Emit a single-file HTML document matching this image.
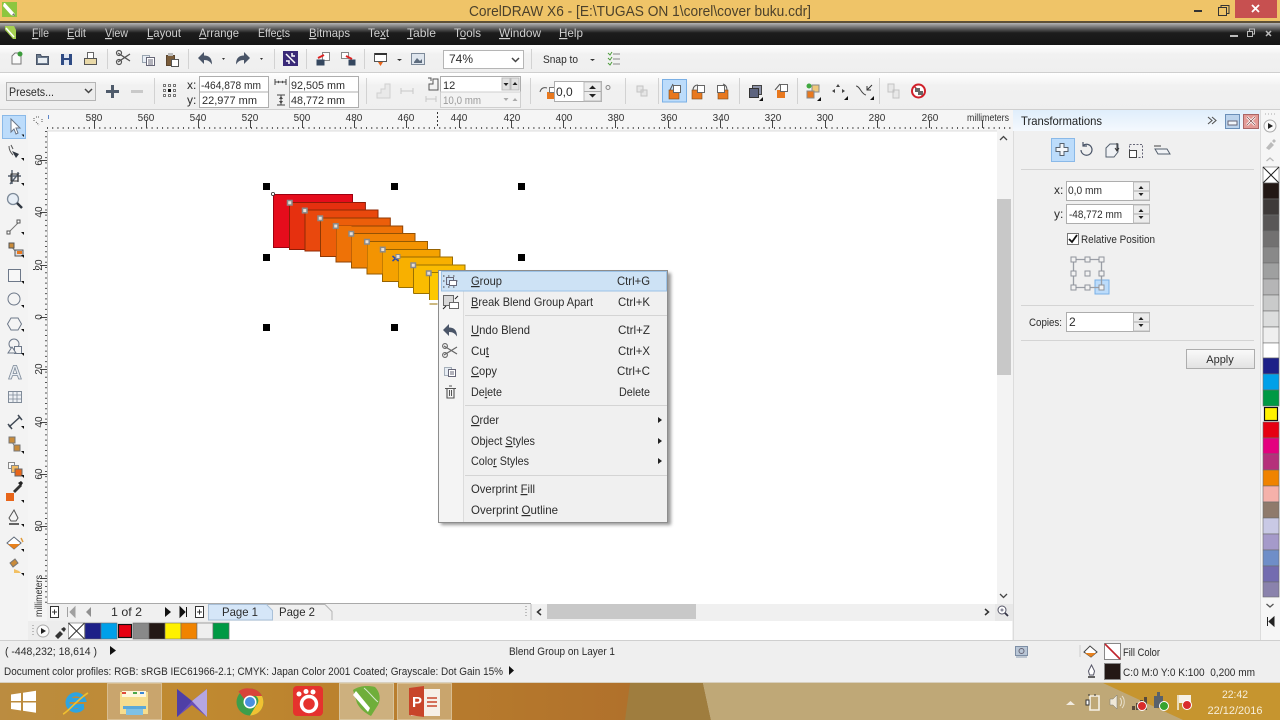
<!DOCTYPE html>
<html lang="en">
<head>
<meta charset="utf-8">
<title>CorelDRAW X6</title>
<style>
html,body{margin:0;padding:0;background:#f0f0f0;width:1280px;height:720px;overflow:hidden}
svg{display:block;filter:blur(.35px)}
text{font-family:"Liberation Sans",sans-serif;font-size:12px;fill:#2c2c2c}
.u{text-decoration:underline}
.mb text{fill:#cfcfcf;font-size:12px}
.r text{font-size:10px;fill:#333;text-anchor:middle}
.sw rect{stroke:#6d6d6d;stroke-width:.6}
.in{fill:#fff;stroke:#adadad}
.sep{stroke:#d2d2d2;stroke-width:1}
.bl rect{stroke-width:1}
</style>
</head>
<body>
<svg width="1280" height="720" viewBox="0 0 1280 720" xmlns="http://www.w3.org/2000/svg">
<defs>
<linearGradient id="gm" x1="0" y1="0" x2="0" y2="1"><stop offset="0" stop-color="#b5b5b5"/><stop offset=".45" stop-color="#1c1c1c"/><stop offset="1" stop-color="#151515"/></linearGradient>
<linearGradient id="gt" x1="0" y1="0" x2="0" y2="1"><stop offset="0" stop-color="#ffffff"/><stop offset=".35" stop-color="#f1f1f1"/><stop offset="1" stop-color="#efefef"/></linearGradient>
<linearGradient id="gh" x1="0" y1="0" x2="0" y2="1"><stop offset="0" stop-color="#e0eefb"/><stop offset="1" stop-color="#f4f9fe"/></linearGradient>
<linearGradient id="gb" x1="0" y1="0" x2="1" y2="0"><stop offset="0" stop-color="#bb8c40"/><stop offset=".3" stop-color="#c08a30"/><stop offset="1" stop-color="#b0702b"/></linearGradient>
<linearGradient id="gs" x1="0" y1="0" x2="0" y2="1"><stop offset="0" stop-color="#fafafa"/><stop offset="1" stop-color="#e2e2e2"/></linearGradient>
<filter id="sh" x="-5%" y="-5%" width="110%" height="110%"><feGaussianBlur stdDeviation="1.500"/></filter>
</defs>

<!-- base -->
<rect width="1280" height="720" fill="#f0f0f0"/>

<!-- title bar -->
<rect width="1280" height="22" fill="#efc468"/>
<rect y="21" width="1280" height="2" fill="#5e5138"/>
<rect x="2" y="2" width="15" height="15" fill="#8dc63f"/>
<path d="M5 3l10 11-1 2-3-1-8-9 1-3z" fill="#fff"/><path d="M12 15l3 1-1-3z" fill="#777"/>
<text x="469" y="16" font-size="15" style="font-size:15px;fill:#4c412b" textLength="342" lengthAdjust="spacingAndGlyphs">CorelDRAW X6 - [E:\TUGAS ON 1\corel\cover buku.cdr]</text>
<rect x="1194" y="10" width="8" height="2" fill="#333"/>
<path d="M1218.500 7.500h8v8h-8zM1221 7.500V5.500h8v8h-2.500" fill="none" stroke="#333" stroke-width="1"/>
<rect x="1235" y="0" width="42" height="18" fill="#c75050"/>
<path d="M1252 5l7 7M1259 5l-7 7" stroke="#fff" stroke-width="1.800"/>

<!-- menu bar -->
<rect y="23" width="1280" height="22" fill="url(#gm)"/>
<path d="M5 26h9l2 4v9l-3 0-8-9z" fill="#a5d051"/><path d="M6 28l8 9" stroke="#fff" stroke-width="1.500"/>
<g class="mb">
<text x="32" y="37" textLength="17" lengthAdjust="spacingAndGlyphs"><tspan class="u">F</tspan>ile</text>
<text x="67" y="37" textLength="19" lengthAdjust="spacingAndGlyphs"><tspan class="u">E</tspan>dit</text>
<text x="105" y="37" textLength="23" lengthAdjust="spacingAndGlyphs"><tspan class="u">V</tspan>iew</text>
<text x="147" y="37" textLength="34" lengthAdjust="spacingAndGlyphs"><tspan class="u">L</tspan>ayout</text>
<text x="199" y="37" textLength="40" lengthAdjust="spacingAndGlyphs"><tspan class="u">A</tspan>rrange</text>
<text x="258" y="37" textLength="32" lengthAdjust="spacingAndGlyphs">Effe<tspan class="u">c</tspan>ts</text>
<text x="309" y="37" textLength="41" lengthAdjust="spacingAndGlyphs"><tspan class="u">B</tspan>itmaps</text>
<text x="368" y="37" textLength="21" lengthAdjust="spacingAndGlyphs">Te<tspan class="u">x</tspan>t</text>
<text x="407" y="37" textLength="29" lengthAdjust="spacingAndGlyphs"><tspan class="u">T</tspan>able</text>
<text x="454" y="37" textLength="27" lengthAdjust="spacingAndGlyphs">T<tspan class="u">o</tspan>ols</text>
<text x="499" y="37" textLength="42" lengthAdjust="spacingAndGlyphs"><tspan class="u">W</tspan>indow</text>
<text x="559" y="37" textLength="24" lengthAdjust="spacingAndGlyphs"><tspan class="u">H</tspan>elp</text>
</g>
<rect x="1230" y="35" width="8" height="2" fill="#bbb"/>
<path d="M1247.500 31.500h5v5h-5zM1249.500 31v-2h5v5h-2" fill="none" stroke="#bbb"/>
<path d="M1266 31l5 5M1271 31l-5 5" stroke="#bbb" stroke-width="1.500"/>

<!-- standard toolbar -->
<rect y="45" width="1280" height="27" fill="url(#gt)"/>
<rect y="72" width="1280" height="1" fill="#cfcfcf"/>
<!-- new -->
<path d="M12 56l3-3h6v11H12z" fill="#fafafa" stroke="#777"/><circle cx="20" cy="54" r="2.500" fill="#3a9b3a"/>
<!-- open -->
<path d="M36.500 54.500h4l1 2h7v8h-12z" fill="#6b7a8d" stroke="#4a5568"/><rect x="38" y="58" width="9" height="5" fill="#e8edf2"/>
<!-- save -->
<rect x="61" y="54" width="11" height="11" fill="#2f4b84"/><rect x="64" y="54" width="5" height="4" fill="#dfe6f2"/><rect x="64" y="60" width="5" height="5" fill="#dfe6f2"/>
<!-- print -->
<path d="M87.500 52.500h6v6h-6z" fill="#fff" stroke="#666"/><path d="M84.500 58.500h12v6h-12z" fill="#e9d9a8" stroke="#555"/>
<line class="sep" x1="107.500" y1="49" x2="107.500" y2="69"/>
<!-- scissors -->
<path d="M118 53l12 8M118 62l12-8" stroke="#555" stroke-width="1.300" fill="none"/><circle cx="119" cy="53" r="2.500" fill="none" stroke="#555" stroke-width="1.200"/><circle cx="119" cy="62" r="2.500" fill="none" stroke="#555" stroke-width="1.200"/>
<!-- copy -->
<path d="M142.500 55.500h7v7h-7z" fill="#e7edf4" stroke="#9aa5b1"/><path d="M146.500 57.500h8v8h-8z" fill="#fff" stroke="#667"/><path d="M148 60h5M148 62h5M148 64h5" stroke="#667"/>
<!-- paste -->
<path d="M166.500 55.500h8v10h-8z" fill="#7a5c3a" stroke="#5b4630"/><rect x="168" y="53" width="5" height="3" fill="#bbb"/><path d="M171.500 59.500h7v7h-7z" fill="#fff" stroke="#555"/>
<line class="sep" x1="188.500" y1="49" x2="188.500" y2="69"/>
<!-- undo/redo -->
<path d="M198 58l6-6v3.500c5 0 8 2.500 8 9-2-3-4-4.500-8-4.500V64z" fill="#4a5568"/>
<path d="M222 58l3 0-1.500 2z" fill="#333"/>
<path d="M250 58l-6-6v3.500c-5 0-8 2.500-8 9 2-3 4-4.500 8-4.500V64z" fill="#4a5568"/>
<path d="M260 58l3 0-1.500 2z" fill="#333"/>
<line class="sep" x1="274.500" y1="49" x2="274.500" y2="69"/>
<rect x="283" y="51" width="15" height="15" fill="#3a2a78"/><path d="M286 54l9 9M295 56l-3 0 0-3M286 61l3 0 0 3" stroke="#fff" stroke-width="1.500" fill="none"/>
<line class="sep" x1="306.500" y1="49" x2="306.500" y2="69"/>
<!-- import/export -->
<path d="M322.500 52.500h7v8h-7z" fill="#fff" stroke="#888"/><path d="M316.500 59.500h8v6h-8z" fill="#35475f"/><path d="M318 58l6-3" stroke="#d22" stroke-width="2"/>
<path d="M341.500 52.500h7v6h-7z" fill="#fff" stroke="#888"/><path d="M348.500 59.500h7v6h-7z" fill="#35475f"/><path d="M346 56l6 3" stroke="#d22" stroke-width="2"/>
<line class="sep" x1="364.500" y1="49" x2="364.500" y2="69"/>
<path d="M374.500 53.500h12v8h-12z" fill="#fff" stroke="#555"/><rect x="375" y="53" width="12" height="2" fill="#333"/><path d="M378 62h5l-2.500 4z" fill="#e8651a"/>
<path d="M397 59h5l-2.500 2z" fill="#333"/>
<path d="M411.500 53.500h13v11h-13z" fill="#dfe6ee" stroke="#7d8a99"/><path d="M414 62l3-4 3 3 2-2v4h-8z" fill="#5d6c7e"/>
<rect x="443.500" y="50.500" width="80" height="18" fill="#fff" stroke="#b5b5b5"/>
<text x="449" y="63">74%</text>
<path d="M512 58l3.500 3.500 3.500-3.500" fill="none" stroke="#444" stroke-width="1.500"/>
<line class="sep" x1="531.500" y1="49" x2="531.500" y2="69"/>
<text x="543" y="63" textLength="35" lengthAdjust="spacingAndGlyphs" style="font-size:11px">Snap to</text>
<path d="M590 59h5l-2.500 2z" fill="#333"/>
<path d="M608 53l2 2 2-3M608 58l2 2 2-3M608 63l2 2 2-3" stroke="#4c9b3a" fill="none"/><path d="M613 54h7M613 59h7M613 64h7" stroke="#888"/>

<!-- property bar -->
<rect y="73" width="1280" height="36" fill="url(#gt)"/>
<rect y="109" width="1280" height="1" fill="#cfcfcf"/>
<rect x="6.500" y="82.500" width="89" height="18" fill="#ececec" stroke="#b5b5b5"/>
<text x="9" y="96" textLength="45" lengthAdjust="spacingAndGlyphs">Presets...</text>
<path d="M85 89l3.500 3.500 3.500-3.500" fill="none" stroke="#444" stroke-width="1.500"/>
<path d="M106 90h5v-5h3v5h5v3h-5v5h-3v-5h-5z" fill="#4f5b6b"/>
<rect x="131" y="90" width="12" height="3" fill="#c9c9c9"/>
<line class="sep" x1="154.500" y1="78" x2="154.500" y2="104"/>
<path d="M163.500 84.500h2v2h-2zM168.500 84.500h2v2h-2zM173.500 84.500h2v2h-2zM163.500 89.500h2v2h-2zM173.500 89.500h2v2h-2zM163.500 94.500h2v2h-2zM168.500 94.500h2v2h-2zM173.500 94.500h2v2h-2z" fill="#fff" stroke="#777"/>
<rect x="168" y="89" width="3" height="3" fill="#111"/>
<text x="187" y="89">x:</text><text x="187" y="104">y:</text>
<rect x="199.500" y="76.500" width="69" height="15.500" class="in"/><rect x="199.500" y="92" width="69" height="15.500" class="in"/>
<text x="201" y="89" textLength="60" lengthAdjust="spacingAndGlyphs" style="font-size:11px">-464,878 mm</text>
<text x="202" y="104" textLength="55" lengthAdjust="spacingAndGlyphs" style="font-size:11px">22,977 mm</text>
<path d="M275 82h11M275 79v6M286 79v6" stroke="#444" fill="none"/>
<path d="M277 82l2-1.500v3zM284 82l-2-1.500v3z" fill="#444"/>
<path d="M277 95h8M277 105h8M281 95v10" stroke="#444" fill="none"/><path d="M281 96l-2 3h4zM281 104l-2-3h4z" fill="#444"/>
<rect x="289.500" y="76.500" width="69" height="15.500" class="in"/><rect x="289.500" y="92" width="69" height="15.500" class="in"/>
<text x="291" y="89" textLength="54" lengthAdjust="spacingAndGlyphs" style="font-size:11px">92,505 mm</text>
<text x="291" y="104" textLength="54" lengthAdjust="spacingAndGlyphs" style="font-size:11px">48,772 mm</text>
<line class="sep" x1="366.500" y1="78" x2="366.500" y2="104"/>
<path d="M377 98v-5h4v-4h4v-5h5v14z" fill="#e9e9e9" stroke="#cfcfcf"/>
<path d="M401 91h12M401 88v6M413 88v6" stroke="#c7c7c7" fill="none"/>
<!-- blend steps -->
<path d="M428 78l3 0 0 3M433 79h5v11h-9v-6h4z" fill="none" stroke="#555"/>
<path d="M426 99h10M426 96v6M436 96v6" stroke="#c7c7c7" fill="none"/>
<rect x="440.500" y="76.500" width="80" height="15.500" class="in"/><rect x="440.500" y="92" width="80" height="15.500" fill="#f3f3f3" stroke="#cfcfcf"/>
<text x="443" y="89" style="font-size:11px">12</text>
<text x="443" y="104" textLength="38" lengthAdjust="spacingAndGlyphs" style="font-size:11px;fill:#9a9a9a">10,0 mm</text>
<rect x="502" y="78" width="8" height="12" fill="#e1e1e1" stroke="#bbb"/><rect x="511" y="78" width="8" height="12" fill="#e1e1e1" stroke="#bbb"/>
<path d="M503.500 83h5l-2.500 3zM512.500 85h5l-2.500-3z" fill="#222"/>
<path d="M503.500 98h5l-2.500 3zM512.500 101h5l-2.500-3z" fill="#aaa"/>
<line class="sep" x1="530.500" y1="78" x2="530.500" y2="104"/>
<rect x="547" y="92" width="7" height="7" fill="#e8781e"/><path d="M540 92c1-4 4-5 7-4" fill="none" stroke="#555"/><rect x="549.500" y="87.500" width="5" height="5" fill="#fff" stroke="#777"/>
<rect x="554.500" y="81.500" width="47" height="20" class="in"/>
<text x="556" y="96" style="font-size:12px">0,0</text>
<rect x="584" y="82" width="17" height="19" fill="#ececec" stroke="#bbb"/><path d="M584 91.500h17" stroke="#aaa"/>
<path d="M589 89h7l-3.500-3.500zM589 94h7l-3.500 3.500z" fill="#222"/>
<circle cx="608" cy="87.500" r="2" fill="none" stroke="#888"/>
<line class="sep" x1="625.500" y1="78" x2="625.500" y2="104"/>
<path d="M637 86h6v6h-6zM641 90h6v6h-6z" fill="#e6e6e6" stroke="#c3c3c3"/>
<line class="sep" x1="658.500" y1="78" x2="658.500" y2="104"/>
<rect x="662.500" y="79.500" width="24" height="22.500" fill="#bcdcfb" stroke="#7ab0e6"/>
<rect x="669" y="90" width="10" height="9" fill="#e8781e" stroke="#7a4a1a" stroke-width=".6"/><rect x="673.500" y="85.500" width="7" height="7" fill="#fff" stroke="#666"/><path d="M670 90l3-6" stroke="#555"/>
<rect x="692" y="90" width="10" height="9" fill="#e8781e" stroke="#7a4a1a" stroke-width=".6"/><rect x="697.500" y="85.500" width="7" height="7" fill="#fff" stroke="#666"/><path d="M693 90c0-3 2-5 5-5" fill="none" stroke="#555"/>
<rect x="718" y="90" width="10" height="9" fill="#e8781e" stroke="#7a4a1a" stroke-width=".6"/><rect x="717.500" y="85.500" width="7" height="7" fill="#fff" stroke="#666"/><path d="M727 90c0-3-1-5-4-6" fill="none" stroke="#555"/>
<line class="sep" x1="739.500" y1="78" x2="739.500" y2="104"/>
<rect x="752.500" y="85.500" width="9" height="9" fill="#8c92a8" stroke="#444"/><rect x="749.500" y="88.500" width="9" height="9" fill="#5d647f" stroke="#333"/><path d="M763 97v4h-4z" fill="#111"/>
<rect x="777" y="90" width="8" height="8" fill="#e8781e"/><rect x="780.500" y="84.500" width="7" height="7" fill="#fff" stroke="#666"/><path d="M775 90l5-6" stroke="#555"/>
<line class="sep" x1="797.500" y1="78" x2="797.500" y2="104"/>
<circle cx="809" cy="86" r="2.500" fill="#3fa83f"/><rect x="812" y="85" width="7" height="7" fill="#f0c87a" stroke="#888"/><rect x="807" y="91" width="7" height="7" fill="#e8781e" stroke="#888"/><path d="M821 97v4h-4z" fill="#111"/>
<path d="M838 84l2 3-4 0zM832 91l3-2 0 4zM845 91l-3-2 0 4z" fill="#444"/><path d="M848 96v4h-4z" fill="#111"/>
<path d="M856 86c4 0 5 8 10 9" fill="none" stroke="#444"/><path d="M872 85l-5 5M867 86v4h4" fill="none" stroke="#333"/><path d="M874 96v4h-4z" fill="#111"/>
<line class="sep" x1="879.500" y1="78" x2="879.500" y2="104"/>
<path d="M888 84h6v8h-6zM893 90h6v8h-6z" fill="#e8e8e8" stroke="#c3c3c3"/>
<circle cx="918.500" cy="91" r="6.500" fill="#fff" stroke="#d0202a" stroke-width="2"/><path d="M914 86l9 10" stroke="#d0202a" stroke-width="1.500"/><rect x="915" y="88" width="5" height="4" fill="#666"/><rect x="918" y="91" width="5" height="4" fill="#666"/>

<!-- toolbox -->
<rect x="0" y="110" width="28" height="530" fill="#f3f3f3"/>
<rect x="2.500" y="115.500" width="23" height="23" fill="#bcdcfb" stroke="#8ab9e8"/>
<g>
<path d="M11 119l0 13 3-3 2 5 2-1-2-5 4 0z" fill="#fff" stroke="#6a7585"/>
<path d="M24 137v-2.500h-2.500z" fill="#111"/>
<path d="M9 146c0 4 2 7 4 9M11 145l2 4" fill="none" stroke="#555"/><path d="M12 151l7 3-3 4z" fill="#2f3640"/><path d="M24 161v-3h-3z" fill="#111"/>
<path d="M8 176h13M12 170v14M18 172v10M10 184l9-11" stroke="#55606e" fill="none" stroke-width="1.400"/><rect x="11" y="174" width="7" height="7" fill="none" stroke="#333"/><path d="M24 186v-3h-3z" fill="#111"/>
<circle cx="13" cy="199" r="5.500" fill="#e7eef6" stroke="#7d8a99" stroke-width="1.300"/><path d="M17 203l5 5" stroke="#2f3640" stroke-width="2.500"/>
<path d="M9 232l9-9" stroke="#777"/><rect x="7" y="231" width="3" height="3" fill="#fff" stroke="#555"/><rect x="17" y="220" width="3" height="3" fill="#fff" stroke="#555"/><path d="M24 235v-3h-3z" fill="#111"/>
<path d="M11 246l5 6" stroke="#777"/><rect x="9" y="243" width="5" height="5" fill="#c98b3a" stroke="#555"/><rect x="15" y="250" width="8" height="6" fill="#d8dce2" stroke="#555"/><rect x="17" y="251" width="5" height="3" fill="#e8781e"/><path d="M24 258v-3h-3z" fill="#111"/>
<rect x="8.500" y="269.500" width="12" height="12" fill="#f7f7f7" stroke="#6d7889"/><path d="M24 284v-3h-3z" fill="#111"/>
<circle cx="14" cy="299" r="6" fill="#f4f4f4" stroke="#6d7889"/><path d="M24 308v-3h-3z" fill="#111"/>
<path d="M11 318h7l3.500 6-3.500 6h-7l-3.500-6z" fill="#f4f4f4" stroke="#6d7889"/><path d="M24 332v-3h-3z" fill="#111"/>
<circle cx="14" cy="344" r="5" fill="#f4f4f4" stroke="#6d7889"/><rect x="14.500" y="346.500" width="7" height="7" fill="#f4f4f4" stroke="#6d7889"/><path d="M8 353l4-6 4 6z" fill="#f4f4f4" stroke="#6d7889"/><path d="M24 356v-3h-3z" fill="#111"/>
<text x="15" y="379" text-anchor="middle" style="font-size:19px;font-weight:bold;fill:#e9edf2;stroke:#7d8a99;stroke-width:.8">A</text>
<rect x="8.500" y="391.500" width="13" height="11" fill="#eef1f5" stroke="#808b99"/><path d="M8.500 395h13M8.500 399h13M13 391.500v11M17 391.500v11" stroke="#808b99" stroke-width=".8"/>
<path d="M9 427l11-10" stroke="#3f4854" stroke-width="1.500"/><path d="M8 424l4 5M18 415l4 5" stroke="#3f4854" stroke-width="1.500"/><path d="M24 429v-3h-3z" fill="#111"/>
<path d="M11 441l6 8" stroke="#777"/><rect x="9" y="437" width="6" height="6" fill="#c98b3a" stroke="#777"/><rect x="14" y="445" width="6" height="6" fill="#c98b3a" stroke="#777"/><path d="M24 454v-3h-3z" fill="#111"/>
<rect x="8.500" y="462.500" width="6" height="6" fill="#f8f8f8" stroke="#888"/><rect x="11.500" y="465.500" width="7" height="7" fill="#f2bb63" stroke="#888"/><rect x="15" y="469" width="7" height="7" fill="#e8651a" stroke="#666"/><path d="M24 478v-3h-3z" fill="#111"/>
<rect x="6" y="493" width="8" height="8" fill="#e8651a"/><path d="M13 491l7-7 2 2-7 7z" fill="#333"/><path d="M18 483l3-2 2 2-2 3z" fill="#222"/><path d="M24 503v-3h-3z" fill="#111"/>
<path d="M14 510l4 8-2 3h-5l-2-3z" fill="#f5f5f5" stroke="#555"/><path d="M9 524h10" stroke="#333" stroke-width="1.500"/><path d="M24 527v-3h-3z" fill="#111"/>
<path d="M7 543l7-6 7 6-7 6z" fill="#fff" stroke="#5f6a78"/><path d="M8 544h12l-6 5z" fill="#e8821e"/><path d="M21 538l2 4" stroke="#e09a3a" stroke-width="1.500"/><path d="M24 552v-3h-3z" fill="#111"/>
<path d="M10 563l5-4 3 4-5 4z" fill="#c98b3a" stroke="#777"/><path d="M14 569l5 2 2 2h-7z" fill="#f2c063"/><path d="M24 576v-3h-3z" fill="#111"/>
</g>

<!-- canvas -->
<rect x="47" y="131" width="950" height="473" fill="#fff"/>
<rect x="230" y="620" width="782" height="20" fill="#fff"/>

<!-- rulers -->
<rect x="28" y="110" width="985" height="21" fill="#f5f5f5"/>
<rect x="28" y="110" width="19" height="530" fill="#f5f5f5"/>
<path d="M47 131H997" stroke="#dcdcdc"/><path d="M47.500 131V604" stroke="#c8c8c8"/>
<path d="M36 117l3 0M36 122l3 3M42 119l0 4M34 118v4" stroke="#555" stroke-dasharray="1 1" fill="none"/>
<path d="M48.500 115v4" stroke="#5d86c8"/>
<line x1="47" x2="1011" y1="128" y2="128" stroke="#555" stroke-width="2" stroke-dasharray="1 4.230"/>
<path d="M94.500 120v8M146.500 120v8M198.500 120v8M250.500 120v8M302.500 120v8M354.500 120v8M406.500 120v8M459.500 120v8M511.500 120v8M563.500 120v8M615.500 120v8M668.500 120v8M720.500 120v8M772.500 120v8M825.500 120v8M877.500 120v8M929.500 120v8M982.500 120v8" stroke="#444"/>
<path d="M437.500 112v16" stroke="#333" stroke-dasharray="2 2"/>
<g class="r">
<text x="94" y="121">580</text><text x="146" y="121">560</text><text x="198" y="121">540</text><text x="250" y="121">520</text><text x="302" y="121">500</text><text x="354" y="121">480</text><text x="406" y="121">460</text><text x="459" y="121">440</text><text x="512" y="121">420</text><text x="564" y="121">400</text><text x="616" y="121">380</text><text x="669" y="121">360</text><text x="721" y="121">340</text><text x="773" y="121">320</text><text x="825" y="121">300</text><text x="877" y="121">280</text><text x="930" y="121">260</text>
<text x="988" y="121" textLength="42" lengthAdjust="spacingAndGlyphs">millimeters</text>
</g>
<line x1="46" x2="46" y1="131" y2="604" stroke="#555" stroke-width="2" stroke-dasharray="1 4.230"/>
<path d="M40 160.500h7M40 212.500h7M40 265.500h7M40 317.500h7M40 369.500h7M40 422.500h7M40 474.500h7M40 526.500h7M40 578.500h7" stroke="#444"/>
<path d="M33 269.500h7" stroke="#333" stroke-dasharray="2 2"/>
<g class="r">
<text transform="translate(42 160) rotate(-90)">60</text><text transform="translate(42 212) rotate(-90)">40</text><text transform="translate(42 265) rotate(-90)">20</text><text transform="translate(42 317) rotate(-90)">0</text><text transform="translate(42 369) rotate(-90)">20</text><text transform="translate(42 422) rotate(-90)">40</text><text transform="translate(42 474) rotate(-90)">60</text><text transform="translate(42 526) rotate(-90)">80</text>
<text transform="translate(42 596) rotate(-90)" textLength="42" lengthAdjust="spacingAndGlyphs">millimeters</text>
</g>

<!-- blend artwork -->
<g class="bl">
<rect x="273.500" y="194.500" width="79" height="53" fill="#e60c1c" stroke="#9f0010"/>
<rect x="289.500" y="202.500" width="75.900" height="47" fill="#e6300f" stroke="#8f1c06"/>
<rect x="305" y="210" width="73" height="41" fill="#e9480d" stroke="#8f2a05"/>
<rect x="320.500" y="218" width="69.800" height="35.500" fill="#ec5e0a" stroke="#8f3804"/>
<rect x="336" y="226" width="66.700" height="29.500" fill="#ee7207" stroke="#8f4304"/>
<rect x="351.500" y="233.500" width="63.500" height="24" fill="#f08305" stroke="#945204"/>
<rect x="367" y="241.500" width="60.500" height="24" fill="#f39402" stroke="#955a02"/>
<rect x="382.500" y="249.500" width="57.500" height="24" fill="#f5a200" stroke="#976200"/>
<rect x="398" y="257" width="54.500" height="24" fill="#f8b000" stroke="#986800"/>
<rect x="413.500" y="265" width="51.500" height="24" fill="#fabc00" stroke="#9a7000"/>
<rect x="429.500" y="272.500" width="48" height="24" fill="#fdc800" stroke="#9a7800"/>
<rect x="398.500" y="257.500" width="15" height="30" fill="#f8b000"/>
<rect x="413.500" y="265.500" width="16" height="28" fill="#fabc00"/>
<rect x="429.500" y="273" width="16" height="27" fill="#fdc800"/>
<path d="M398.500 257v30M398.500 287.500h15M413.500 265v28.500M413.500 293.500h16M429.500 273v27M429.500 304h8" fill="none" stroke="#9a7000"/>
<rect x="382.500" y="250" width="16" height="31.500" fill="#f5a200"/><path d="M382.500 250v31.500h16" fill="none" stroke="#976200"/>
<rect x="367" y="242" width="15.500" height="32" fill="#f39402"/><path d="M367 242v32h15.500" fill="none" stroke="#955a02"/>
<rect x="351.500" y="234" width="15.500" height="34" fill="#f08305"/><path d="M351.500 234v34h15.500" fill="none" stroke="#945204"/>
<rect x="336" y="226" width="15.500" height="36" fill="#ee7207"/><path d="M336 226v36h15.500" fill="none" stroke="#8f4304"/>
<rect x="320.500" y="218.500" width="15.500" height="38" fill="#ec5e0a"/><path d="M320.500 218v38.500h15.500" fill="none" stroke="#8f3804"/>
<path d="M305 210v41h15.500" fill="none" stroke="#8f2a05"/>
</g>
<g fill="#e8e0d8" stroke="#8a8a8a" stroke-width="1.500">
<rect x="287.500" y="200.500" width="4.500" height="4.500"/><rect x="302.500" y="208.300" width="4.500" height="4.500"/><rect x="318" y="216" width="4.500" height="4.500"/><rect x="333.500" y="223.800" width="4.500" height="4.500"/><rect x="349" y="231.500" width="4.500" height="4.500"/><rect x="364.700" y="239.500" width="4.500" height="4.500"/><rect x="380.500" y="247.300" width="4.500" height="4.500"/><rect x="411" y="263" width="4.500" height="4.500"/><rect x="426.500" y="271" width="4.500" height="4.500"/>
</g>
<circle cx="273" cy="194" r="1.600" fill="#fff" stroke="#333" stroke-width=".8"/>
<path d="M392.500 256l6 5M398.500 256l-6 5" stroke="#2a4bb0" stroke-width="1.500"/><rect x="396" y="254.500" width="4" height="4" fill="#e8e0d8" stroke="#888"/>
<g fill="#000">
<rect x="263" y="183" width="7" height="7"/><rect x="391" y="183" width="7" height="7"/><rect x="518" y="183" width="7" height="7"/>
<rect x="263" y="254" width="7" height="7"/><rect x="518" y="254" width="7" height="7"/>
<rect x="263" y="324" width="7" height="7"/><rect x="391" y="324" width="7" height="7"/>
</g>

<!-- context menu -->
<rect x="441" y="273" width="230" height="252" fill="#555" opacity=".6" filter="url(#sh)"/>
<rect x="438.500" y="270.500" width="229" height="252" fill="#f0f0f0" stroke="#8d8d8d"/>
<rect x="439" y="271" width="24" height="251" fill="#f4f4f4"/>
<path d="M463.500 271v251" stroke="#dcdcdc"/>
<rect x="441.500" y="271.500" width="225" height="19.500" fill="#cde2f5" stroke="#9cc2e6"/>
<path d="M465 315.500H667M465 405.500H667M465 475.500H667" stroke="#d4d4d4"/>
<!-- menu icons -->
<path d="M443 276h15M443 281h2M456 281h2M443 287h15" stroke="#444" stroke-dasharray="1.500 3.500"/><path d="M446.500 277.500h7v7h-7z" fill="none" stroke="#667"/><rect x="449.500" y="280.500" width="7" height="5" fill="#fff" stroke="#667"/>
<rect x="443.500" y="295.500" width="10" height="10" fill="#d8d8d8" stroke="#666"/><rect x="449.500" y="302.500" width="9" height="6" fill="#fff" stroke="#666"/><path d="M455 299l3-3M443 309l3-3" stroke="#222"/>
<path d="M443 330l6-6v3.500c5 0 8 2.500 8 9-2-3-4-4.500-8-4.500V336z" fill="#4a5568"/>
<path d="M444 346l13 8M444 355l13-8" stroke="#666" stroke-width="1.200"/><circle cx="445" cy="346" r="2.400" fill="none" stroke="#666" stroke-width="1.100"/><circle cx="445" cy="355" r="2.400" fill="none" stroke="#666" stroke-width="1.100"/>
<path d="M444.500 367.500h7v8h-7z" fill="#e7edf4" stroke="#a5afba"/><path d="M448.500 369.500h7v7h-7z" fill="#fff" stroke="#667"/><path d="M450 372h4M450 374h4" stroke="#667"/>
<path d="M445 388.500h11M447 388v10h7v-10M449 386h3" fill="none" stroke="#555" stroke-width="1.100"/><path d="M449.500 390v6M451.500 390v6" stroke="#555"/>
<g>
<text x="471" y="285" textLength="31" lengthAdjust="spacingAndGlyphs"><tspan class="u">G</tspan>roup</text>
<text x="471" y="306" textLength="122" lengthAdjust="spacingAndGlyphs"><tspan class="u">B</tspan>reak Blend Group Apart</text>
<text x="471" y="334" textLength="59" lengthAdjust="spacingAndGlyphs"><tspan class="u">U</tspan>ndo Blend</text>
<text x="471" y="355" textLength="18" lengthAdjust="spacingAndGlyphs">Cu<tspan class="u">t</tspan></text>
<text x="471" y="375" textLength="26" lengthAdjust="spacingAndGlyphs"><tspan class="u">C</tspan>opy</text>
<text x="471" y="396" textLength="31" lengthAdjust="spacingAndGlyphs">De<tspan class="u">l</tspan>ete</text>
<text x="471" y="424" textLength="28" lengthAdjust="spacingAndGlyphs"><tspan class="u">O</tspan>rder</text>
<text x="471" y="445" textLength="64" lengthAdjust="spacingAndGlyphs">Object <tspan class="u">S</tspan>tyles</text>
<text x="471" y="465" textLength="58" lengthAdjust="spacingAndGlyphs">Colo<tspan class="u">r</tspan> Styles</text>
<text x="471" y="493" textLength="64" lengthAdjust="spacingAndGlyphs">Overprint <tspan class="u">F</tspan>ill</text>
<text x="471" y="514" textLength="87" lengthAdjust="spacingAndGlyphs">Overprint <tspan class="u">O</tspan>utline</text>
<text x="617" y="285" textLength="33" lengthAdjust="spacingAndGlyphs">Ctrl+G</text>
<text x="618" y="306" textLength="32" lengthAdjust="spacingAndGlyphs">Ctrl+K</text>
<text x="618" y="334" textLength="32" lengthAdjust="spacingAndGlyphs">Ctrl+Z</text>
<text x="618" y="355" textLength="32" lengthAdjust="spacingAndGlyphs">Ctrl+X</text>
<text x="617" y="375" textLength="33" lengthAdjust="spacingAndGlyphs">Ctrl+C</text>
<text x="619" y="396" textLength="31" lengthAdjust="spacingAndGlyphs">Delete</text>
</g>
<path d="M658 417l4 3-4 3zM658 438l4 3-4 3zM658 458l4 3-4 3z" fill="#222"/>

<!-- canvas scrollbars -->
<rect x="997" y="131" width="16" height="473" fill="#f3f3f3"/>
<rect x="997" y="199" width="14" height="176" fill="#c8c8c8"/>
<path d="M1000 140l3.500-3.500 3.500 3.500M1000 594l3.500 3.500 3.500-3.500" fill="none" stroke="#444" stroke-width="1.300"/>
<rect x="47" y="604" width="966" height="17" fill="#f0f0f0"/>
<path d="M47 603.500H531" stroke="#aaa"/>
<!-- page nav -->
<rect x="50.500" y="606.500" width="8" height="11" fill="#fff" stroke="#333"/><path d="M52 612h5M54.500 609.500v5" stroke="#333"/>
<path d="M67.500 607v10M75 607l-5 5 5 5z" fill="#a0a0a0" stroke="#a0a0a0"/>
<path d="M91 607l-5 5 5 5z" fill="#8f8f8f"/>
<text x="111" y="616" textLength="31" lengthAdjust="spacingAndGlyphs">1 of 2</text>
<path d="M165 607l6 5-6 5z" fill="#111"/>
<path d="M180 607l5 5-5 5zM186.500 607v10" fill="#111" stroke="#111"/>
<rect x="195.500" y="606.500" width="8" height="11" fill="#fff" stroke="#333"/><path d="M197 612h5M199.500 609.500v5" stroke="#333"/>
<path d="M267 604.500h58l7 7v8.500" fill="#f0f0f0" stroke="#b5b5b5"/>
<path d="M208.500 604.500h58l6 6v9.500h-64z" fill="#d5e6f8" stroke="#a9c0d8"/>
<text x="222" y="616" textLength="36" lengthAdjust="spacingAndGlyphs">Page 1</text>
<text x="279" y="616" textLength="36" lengthAdjust="spacingAndGlyphs">Page 2</text>
<path d="M526 606v1M526 609v1M526 612v1M526 615v1" stroke="#888"/>
<path d="M531 604v16" stroke="#bbb"/>
<path d="M541 609l-3.500 3 3.500 3" fill="none" stroke="#333" stroke-width="1.500"/>
<rect x="547" y="604" width="149" height="15" fill="#c8c8c8"/>
<path d="M985 609l3.500 3-3.500 3" fill="none" stroke="#333" stroke-width="1.500"/>
<rect x="995" y="604" width="18" height="17" fill="#e8e8e8"/>
<circle cx="1002" cy="610" r="4" fill="#fff" stroke="#556"/><circle cx="1002" cy="610" r="1.500" fill="#889"/><path d="M1005 613l3 3" stroke="#334" stroke-width="1.800"/>

<!-- bottom palette strip -->
<rect x="28" y="621" width="202" height="19" fill="#ededed"/>
<path d="M33 625v1M33 628v1M33 631v1M33 634v1" stroke="#888"/>
<circle cx="43" cy="631" r="6" fill="#fafafa" stroke="#aaa"/><path d="M41 628l5 3-5 3z" fill="#222"/>
<path d="M55 636l5-5 3 3-5 5zM61 629l3-2 2 2-2 3z" fill="#333"/>
<g class="sw">
<rect x="68.500" y="623" width="16" height="16" fill="#fff"/><path d="M68.500 623l16 16M84.500 623l-16 16" stroke="#333"/>
<rect x="85" y="623" width="16" height="16" fill="#1d2088"/>
<rect x="101" y="623" width="16" height="16" fill="#00a0e9"/>
<rect x="133" y="623" width="16" height="16" fill="#898989"/>
<rect x="149" y="623" width="16" height="16" fill="#231815"/>
<rect x="165" y="623" width="16" height="16" fill="#fff100"/>
<rect x="181" y="623" width="16" height="16" fill="#f08300"/>
<rect x="197" y="623" width="16" height="16" fill="#efefef"/>
<rect x="213" y="623" width="16" height="16" fill="#009944"/>
</g>
<rect x="118.500" y="624.500" width="13" height="13" fill="#e60012" stroke="#111" stroke-width="1.200"/>

<!-- docker -->
<rect x="1013" y="110" width="247" height="530" fill="#f0f0f0"/>
<path d="M1013.500 131V640M1260.500 110V640" stroke="#dcdcdc"/>
<rect x="1013" y="110" width="247" height="21" fill="url(#gh)"/>
<text x="1021" y="125" textLength="81" lengthAdjust="spacingAndGlyphs" style="fill:#222">Transformations</text>
<path d="M1208 117l4 3.500-4 3.500M1212 117l4 3.500-4 3.500" fill="none" stroke="#555" stroke-width="1.100"/>
<rect x="1225.500" y="114.500" width="14" height="14" fill="#bcd3ec" stroke="#6b8fb8"/><rect x="1228" y="121" width="9" height="4" fill="#f2f6fb" stroke="#667"/>
<rect x="1243.500" y="114.500" width="15" height="14" fill="#e39a96" stroke="#a66"/><path d="M1247 117l8 8M1255 117l-8 8" stroke="#fff" stroke-width="2.500"/><path d="M1247 117l8 8M1255 117l-8 8" stroke="#7a3a3a" stroke-width=".7"/>
<!-- docker tabs -->
<rect x="1051.500" y="138.500" width="23" height="23" fill="#bcdcfb" stroke="#8ab9e8"/>
<path d="M1061 144h4v4h4v4h-4v4h-4v-4h-4v-4h4z" transform="translate(-1 -0.500)" fill="#f4f7fb" stroke="#55606e"/>
<path d="M1081 150a5.500 5.500 0 1 0 2-4.500M1083 142v4h4" fill="none" stroke="#4a5568" stroke-width="1.200"/>
<path d="M1106 148l4-4h8v8l-4 5h-8z" fill="#f0f2f5" stroke="#55606e"/><path d="M1117 143v7M1115 148l2 3 2-3" stroke="#333" fill="none"/>
<path d="M1129.500 144.500h13v13h-13z" fill="none" stroke="#667" stroke-dasharray="2 1.500"/><rect x="1129.500" y="150.500" width="7" height="7" fill="#fff" stroke="#444"/>
<path d="M1155 149h12l3 5h-12z" fill="#f0f2f5" stroke="#55606e"/><path d="M1154 146h7" stroke="#444"/>
<path d="M1021 169.500H1254M1021 305.500H1254M1021 340.500H1254" stroke="#d4d4d4"/>
<!-- fields -->
<text x="1054" y="194">x:</text><text x="1054" y="218">y:</text>
<rect x="1066.500" y="181.500" width="83" height="19" class="in"/><rect x="1066.500" y="204.500" width="83" height="19" class="in"/>
<text x="1068" y="194" style="font-size:11px" textLength="34" lengthAdjust="spacingAndGlyphs">0,0 mm</text>
<text x="1069" y="218" style="font-size:11px" textLength="53" lengthAdjust="spacingAndGlyphs">-48,772 mm</text>
<g>
<rect x="1133.500" y="182" width="16" height="18" fill="#ececec" stroke="#bbb"/><path d="M1134 191h15" stroke="#aaa"/><path d="M1138.500 189h5l-2.500-3zM1138.500 193h5l-2.500 3z" fill="#222"/>
<rect x="1133.500" y="205" width="16" height="18" fill="#ececec" stroke="#bbb"/><path d="M1134 214h15" stroke="#aaa"/><path d="M1138.500 212h5l-2.500-3zM1138.500 216h5l-2.500 3z" fill="#222"/>
</g>
<rect x="1067.500" y="233.500" width="11" height="11" fill="#fff" stroke="#777"/><path d="M1069 239l3 3 5-7" fill="none" stroke="#111" stroke-width="1.800"/>
<text x="1081" y="243" textLength="74" lengthAdjust="spacingAndGlyphs" style="font-size:11px">Relative Position</text>
<!-- reference point -->
<rect x="1095" y="280" width="14" height="14" fill="#bcdcfb" stroke="#7ab0e6"/>
<path d="M1073.500 259.500H1101.500V287.500H1073.500z" fill="none" stroke="#9a9ea6" stroke-width="1.300"/>
<g fill="#f2f2f2" stroke="#8f939b">
<rect x="1071" y="257" width="5" height="5"/><rect x="1085" y="257" width="5" height="5"/><rect x="1099" y="257" width="5" height="5"/>
<rect x="1071" y="271" width="5" height="5"/><rect x="1085" y="271" width="5" height="5"/><rect x="1099" y="271" width="5" height="5"/>
<rect x="1071" y="285" width="5" height="5"/><rect x="1085" y="285" width="5" height="5"/><rect x="1099" y="285" width="5" height="5"/>
</g>
<text x="1029" y="326" textLength="33" lengthAdjust="spacingAndGlyphs" style="font-size:11px">Copies:</text>
<rect x="1066.500" y="312.500" width="83" height="19" class="in"/>
<text x="1069" y="326">2</text>
<rect x="1133.500" y="313" width="16" height="18" fill="#ececec" stroke="#bbb"/><path d="M1134 322h15" stroke="#aaa"/><path d="M1138.500 320h5l-2.500-3zM1138.500 324h5l-2.500 3z" fill="#222"/>
<rect x="1186.500" y="349.500" width="68" height="19" fill="url(#gs)" stroke="#adadad"/>
<text x="1220" y="363" text-anchor="middle" style="font-size:11px">Apply</text>

<!-- right palette -->
<rect x="1261" y="110" width="19" height="530" fill="#f6f6f6"/>
<path d="M1265 114h1M1268 114h1M1271 114h1M1274 114h1" stroke="#aaa"/>
<circle cx="1270" cy="126" r="6" fill="#fafafa" stroke="#aaa"/><path d="M1268 123l5 3-5 3z" fill="#222"/>
<path d="M1266 148l5-6 3 3-5 5zM1272 141l2-2 2 2-2 2z" fill="#bbb"/>
<path d="M1266.500 161l3.500-3 3.500 3" fill="none" stroke="#bbb" stroke-width="1.300"/>
<g class="sw">
<rect x="1263" y="167" width="16" height="16" fill="#fff"/><path d="M1263 167l16 16M1279 167l-16 16" stroke="#222"/>
<rect x="1263" y="183" width="16" height="16" fill="#231815"/>
<rect x="1263" y="199" width="16" height="16" fill="#3e3a39"/>
<rect x="1263" y="215" width="16" height="16" fill="#595757"/>
<rect x="1263" y="231" width="16" height="16" fill="#727171"/>
<rect x="1263" y="247" width="16" height="16" fill="#898989"/>
<rect x="1263" y="263" width="16" height="16" fill="#9fa0a0"/>
<rect x="1263" y="279" width="16" height="16" fill="#b5b5b6"/>
<rect x="1263" y="295" width="16" height="16" fill="#c9caca"/>
<rect x="1263" y="311" width="16" height="16" fill="#dcdddd"/>
<rect x="1263" y="327" width="16" height="16" fill="#efefef"/>
<rect x="1263" y="343" width="16" height="15" fill="#ffffff"/>
<rect x="1263" y="358" width="16" height="16" fill="#1d2088"/>
<rect x="1263" y="374" width="16" height="16" fill="#00a0e9"/>
<rect x="1263" y="390" width="16" height="16" fill="#009944"/>
<rect x="1263" y="422" width="16" height="16" fill="#e60012"/>
<rect x="1263" y="438" width="16" height="16" fill="#e4007f"/>
<rect x="1263" y="454" width="16" height="16" fill="#b5307b"/>
<rect x="1263" y="470" width="16" height="16" fill="#f08300"/>
<rect x="1263" y="486" width="16" height="16" fill="#f5b1aa"/>
<rect x="1263" y="502" width="16" height="16" fill="#8f7a6c"/>
<rect x="1263" y="518" width="16" height="16" fill="#c9c9e5"/>
<rect x="1263" y="534" width="16" height="16" fill="#a59aca"/>
<rect x="1263" y="550" width="16" height="16" fill="#6f8ec8"/>
<rect x="1263" y="566" width="16" height="16" fill="#736cb0"/>
<rect x="1263" y="582" width="16" height="15" fill="#8a82ac"/>
</g>
<rect x="1264.500" y="407.500" width="13" height="13" fill="#fff100" stroke="#111" stroke-width="1.200"/>
<path d="M1266.500 604l3.500 3 3.500-3" fill="none" stroke="#555" stroke-width="1.300"/>
<path d="M1267.500 617v9M1274 617l-5 4.500 5 4.500z" fill="#222" stroke="#222"/>

<!-- status bar -->
<rect y="640" width="1280" height="1" fill="#cfcfcf"/>
<rect y="641" width="1280" height="41" fill="#efefef"/>
<rect y="682" width="1280" height="1" fill="#d8d0bf"/>
<text x="5" y="655" textLength="92" lengthAdjust="spacingAndGlyphs" style="font-size:11px">( -448,232; 18,614 )</text>
<path d="M110 646l6 4.500-6 4.500z" fill="#111"/>
<text x="509" y="655" textLength="106" lengthAdjust="spacingAndGlyphs" style="font-size:11px">Blend Group on Layer 1</text>
<text x="4" y="675" textLength="499" lengthAdjust="spacingAndGlyphs" style="font-size:11px">Document color profiles: RGB: sRGB IEC61966-2.1; CMYK: Japan Color 2001 Coated; Grayscale: Dot Gain 15%</text>
<path d="M509 666l5 4.500-5 4.500z" fill="#111"/>
<rect x="1015.500" y="646.500" width="12" height="9" fill="#b9c6d6" stroke="#7d8ea5"/><circle cx="1021.500" cy="651" r="2.500" fill="none" stroke="#667"/><path d="M1016 657h11" stroke="#8a9bb0"/>
<path d="M1080 645v12" stroke="#ccc"/>
<path d="M1084 652l6-6 7 6-6 5z" fill="#fff" stroke="#444"/><path d="M1085 653h11l-5 4z" fill="#e8821e"/>
<rect x="1104.500" y="643.500" width="16" height="16" fill="#fff" stroke="#888"/><path d="M1105 644l15 15" stroke="#c0232b" stroke-width="1.600"/>
<text x="1123" y="656" textLength="37" lengthAdjust="spacingAndGlyphs" style="font-size:11px">Fill Color</text>
<path d="M1091.500 665l3 6-1 4h-4l-1-4z" fill="#fff" stroke="#556"/><path d="M1088 677h7" stroke="#333" stroke-width="1.500"/>
<rect x="1104.500" y="663.500" width="16" height="16" fill="#231815" stroke="#888"/>
<text x="1123" y="676" textLength="132" lengthAdjust="spacingAndGlyphs" style="font-size:11px" xml:space="preserve">C:0 M:0 Y:0 K:100  0,200 mm</text>

<!-- taskbar -->
<rect y="683" width="640" height="37" fill="url(#gb)"/>
<polygon points="703,683 1280,683 1280,720 711,720" fill="#bfa877"/>
<polygon points="625,720 630,683 703,683 711,720" fill="#9f7d3e"/>
<polygon points="1103,683 1280,683 1280,720 1183,720" fill="#c6952f"/>
<!-- start -->
<path d="M11 694.500l10-1.500v8H11zM23 692.700l13-2v10.300H23zM11 702.500h10v8l-10-1.500zM23 702.500h13v10.200l-13-2z" fill="#fff"/>
<!-- IE -->
<path d="M84 706h-16M68 700h16a8.500 8.500 0 0 0-16.500 2 8.500 8.500 0 0 0 15.500 5" fill="none" stroke="#2ea4e0" stroke-width="4"/>
<path d="M63 714c4-1 16-16 25-21" fill="none" stroke="#efbf2f" stroke-width="1.600"/>
<!-- explorer -->
<rect x="107.500" y="683.500" width="54" height="36" fill="#c9a56d" stroke="#d8bd90"/>
<path d="M120 692h28v22h-28z" fill="#f6dd8e"/><rect x="122" y="691" width="24" height="6" fill="#fdf6dc"/>
<rect x="122" y="692" width="4" height="2" fill="#e04a3a"/><rect x="133" y="692" width="4" height="2" fill="#4aa84a"/><rect x="140" y="692" width="4" height="2" fill="#3a88d8"/>
<path d="M126 708h17v7h-17z" fill="#7fc1e4"/><path d="M123 706h23v3h-23z" fill="#5ca9d8"/>
<!-- VS -->
<path d="M177 689l15 12 15-12v28l-15-12-15 12z" fill="#6a4fb8"/><path d="M177 689l15 12-15 16z" fill="#4f3fa6"/><path d="M192 701l15-12v28z" fill="#b5a6e2"/>
<!-- chrome -->
<circle cx="250" cy="702" r="13.500" fill="#3c9e4b"/><path d="M250 688.500a13.500 13.500 0 0 1 12 7.500h-12a6 6 0 0 0-5.500 3.500l-6-8a13.500 13.500 0 0 1 11.500-3z" fill="#d8443a"/><path d="M262 696a13.500 13.500 0 0 1-12 19.500l6-10a6 6 0 0 0 0-9.500z" fill="#f1c232"/><circle cx="250" cy="702" r="6.500" fill="#fff"/><circle cx="250" cy="702" r="5" fill="#4a8fe0"/>
<!-- gom -->
<rect x="293" y="686" width="30" height="30" rx="4" fill="#e5322d"/><circle cx="309" cy="704" r="7.500" fill="none" stroke="#fff" stroke-width="3.500"/><circle cx="299" cy="694" r="2.500" fill="#fff"/><circle cx="306" cy="691.500" r="2.500" fill="#fff"/><circle cx="313" cy="692" r="2.500" fill="#fff"/>
<!-- corel -->
<rect x="339.500" y="683.500" width="54" height="36" fill="#cdb07e" stroke="#d8c49c"/>
<path d="M353 690c6-4 14-5 22-3 5 5 6 12 3 18l-7 11c-6-3-11-7-14-13z" fill="#6fae3a"/><path d="M356 691l14 17-2 4-15-17z" fill="#fff"/><path d="M364 688c6 5 10 11 14 14" fill="none" stroke="#d8ead0"/>
<!-- ppt -->
<rect x="397.500" y="683.500" width="54" height="36" fill="#c9a56d" stroke="#d8bd90"/>
<path d="M411 689h29v27h-29z" fill="#f6f0e8"/><path d="M409 688l15-2v31l-15-2z" fill="#c8452a"/>
<text x="412" y="707" style="font-size:15px;font-weight:bold;fill:#fff">P</text>
<path d="M427 698h10M427 702h10M427 706h10" stroke="#c8452a" stroke-width="1.500"/>
<!-- tray -->
<path d="M1066 705l4.500-4 4.500 4z" fill="#f1ebe0"/>
<path d="M1090 696h9v14h-9z" fill="none" stroke="#f5f0e6" stroke-width="1.600"/><path d="M1086 700h3v5h-3zM1089 694v2M1095 694v2" stroke="#333" fill="#fff"/>
<path d="M1110 699h3l4-4v14l-4-4h-3z" fill="#efe8d8" stroke="#777" stroke-width=".5"/><path d="M1120 698c2 2 2 6 0 8M1122 696c3 3 3 9 0 12" fill="none" stroke="#e8e0cc"/>
<path d="M1132 706h3v4h-3zM1136 703h3v7h-3zM1140 700h3v10h-3zM1144 697h3v13h-3z" fill="#57493a"/><circle cx="1142" cy="706" r="4.500" fill="#d92b2b" stroke="#fff"/>
<path d="M1154 696h9v12h-9z" fill="#59616b"/><path d="M1157 692h3v4h-3z" fill="#59616b"/><circle cx="1164" cy="706" r="4.500" fill="#37a32f" stroke="#fff"/>
<path d="M1178 695v15" stroke="#f5f0e6" stroke-width="1.500"/><path d="M1179 695h12v8h-12z" fill="#f5f0e6"/><circle cx="1187" cy="705" r="4.500" fill="#d92b2b" stroke="#fff"/>
<text x="1235" y="698" text-anchor="middle" textLength="26" lengthAdjust="spacingAndGlyphs" style="font-size:11px;fill:#f6eeda">22:42</text>
<text x="1235" y="714" text-anchor="middle" textLength="55" lengthAdjust="spacingAndGlyphs" style="font-size:11px;fill:#f6eeda">22/12/2016</text>
</svg>
</body>
</html>
